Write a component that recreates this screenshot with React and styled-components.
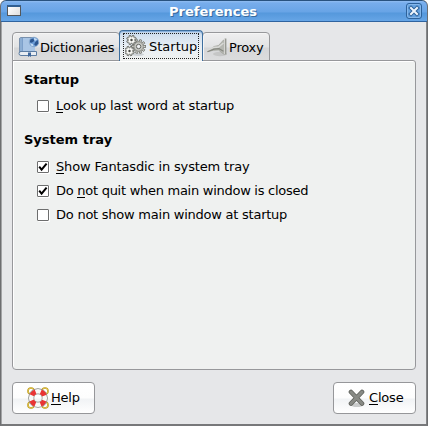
import React from 'react';
import styled, { createGlobalStyle } from 'styled-components';

const Global = createGlobalStyle`
  * { box-sizing: border-box; }
  html, body { margin: 0; padding: 0; overflow: hidden; background: #fff; }
  body { font-family: "DejaVu Sans", sans-serif; font-size: 13px; color: #000; }
  svg { display: block; flex: none; }
`;

const Window = styled.div`
  width: 428px;
  height: 426px;
  display: flex;
  flex-direction: column;
  background: #e6e7e9;
  border: 1px solid #6d6e70;
  border-top: 0;
  border-bottom: 2px solid #77787a;
  border-radius: 6px 6px 0 0;
  box-shadow: inset 1px 0 #a3a4a6, inset -1px 0 #858688;
  overflow: hidden;
`;

const TitleBar = styled.header`
  display: grid;
  grid-template-columns: 24px 1fr 24px;
  align-items: center;
  flex: none;
  height: 22px;
  margin: 0 -1px;
  padding: 0 5px;
  border: 1px solid #2f639f;
  border-top-color: #28527f;
  border-radius: 6px 6px 0 0;
  background: linear-gradient(#91bdf1 0, #77adec 2px, #68a4e6 11px, #5598dc 12px, #66a5e6 20px);
`;

const WindowIcon = styled.span`
  width: 14px;
  height: 11px;
  margin: 0 0 1px 1px;
  border: 1px solid #54575a;
  border-top: 2px solid #315f91;
  background: linear-gradient(135deg, #fff, #dedede);
`;

const Title = styled.h1`
  margin: 1px 1px 0 0;
  padding-right: 1px;
  text-align: center;
  font-size: 13px;
  line-height: 16px;
  font-weight: bold;
  color: #fff;
  text-shadow: 1px 1px #386b9e;
`;

const TitleButton = styled.button`
  display: grid;
  place-items: center;
  justify-self: end;
  width: 16px;
  height: 16px;
  padding: 0;
  border: 1px solid #2d629b;
  border-radius: 3px;
  background: #64a1df;
  box-shadow: inset 0 0 0 1px #86b7ea;
`;

const Body = styled.main`
  display: flex;
  flex-direction: column;
  flex: 1;
  padding: 8px 11px 10px;
`;

const TabBar = styled.nav`
  display: flex;
  align-items: flex-end;
  height: 31px;
  position: relative;
  z-index: 1;
`;

const Label = styled.span`
  line-height: 16px;
  white-space: nowrap;
  letter-spacing: ${p => p.$spacing || 0}px;
`;

const Tab = styled.button`
  display: flex;
  align-items: center;
  width: ${p => p.$width}px;
  height: ${p => (p.$active ? 31 : 29)}px;
  margin: 0 ${p => (p.$active ? -1 : 0)}px;
  padding: 0 0 ${p => (p.$active ? 1 : 0)}px ${p => p.$inset}px;
  gap: ${p => p.$gap}px;
  position: relative;
  z-index: ${p => (p.$active ? 1 : 0)};
  font: inherit;
  color: #000;
  border: 1px solid ${p => (p.$active ? '#3e6f9f' : '#97989b')};
  border-bottom: ${p => (p.$active ? '0' : '1px solid #97989b')};
  border-radius: 4px 4px 0 0;
  background: ${p => (p.$active
    ? 'linear-gradient(#b9d0e9 0, #d2e0ef 4px, #e9eff4 16px, #eff1f0 28px)'
    : 'linear-gradient(#efeff0 0, #e2e3e4 14px, #d5d6d8 15px, #dcddde 28px)')};
  box-shadow: ${p => (p.$active ? 'inset 0 1px #87b0dc' : 'inset 1px 1px #f5f5f5')};

  ${Label} { padding-top: 2px; }
`;

const FocusRing = styled.span`
  position: absolute;
  inset: 2px 3px 2px;
  border: 1px dotted #222;
`;

const Mnemonic = styled.span`
  display: inline-block;
  height: 15px;
  border-bottom: 1px solid #000;
  line-height: 16px;
  vertical-align: top;
`;

const Panel = styled.section`
  height: 310px;
  margin-top: -1px;
  padding: 11px 11px;
  background: #eff1f0;
  border: 1px solid #97989b;
  border-radius: 0 3px 4px 4px;
  box-shadow: inset 1px 1px #fff;
`;

const Group = styled.div`
  height: ${p => p.$height}px;
`;

const Heading = styled.h2`
  margin: 0 0 ${p => p.$gap}px;
  font-size: 13px;
  line-height: 15px;
  letter-spacing: ${p => p.$spacing || 0}px;
`;

const Option = styled.label`
  display: flex;
  align-items: center;
  height: 24px;
  padding-left: 13px;
  gap: 7px;
`;

const Box = styled.span`
  width: 12px;
  height: 12px;
  flex: none;
  background: #fff;
  border: 1px solid #6d6e6e;
  border-radius: 1px;
  box-shadow: 1px 1px #fff;
`;

const Actions = styled.footer`
  display: flex;
  justify-content: space-between;
  margin-top: 12px;
`;

const ActionButton = styled.button`
  display: flex;
  align-items: center;
  width: 83px;
  height: 32px;
  padding: 0 0 0 14px;
  gap: ${p => p.$gap}px;
  font: inherit;
  color: #000;
  border: 1px solid #96979a;
  border-radius: 4px;
  background: linear-gradient(#fff 0, #fdfdfd 15px, #f1f3f5 16px, #fff 30px);
`;

const DictionaryIcon = () => (
  <svg width="22" height="22" viewBox="0 0 22 22">
    <path d="M2.5 1.5h14v15h-15V3a1.5 1.5 0 0 1 1-1.5z" fill="#8caed4" stroke="#7890ad" />
    <path d="M5 2h12v13H5z" fill="#a9c5e5" />
    <path d="M4.5 2v13" stroke="#7da0ca" />
    <path d="M2 15.5h16.5v4H3a1.5 1.5 0 0 1 0-4z" fill="#e8edf3" stroke="#5c7da3" />
    <path d="M10 16.5V21l1.5-1 1.5 1v-4.5z" fill="#3e679c" />
    <circle cx="16" cy="6" r="4.8" fill="#6b9bd5" stroke="#8da9c9" strokeWidth=".7" />
    <path d="M12.4 3.6l3-1 .8 2.4-2.4 1.8-2-.6zM17 6.5l2.6-2.4.8 3.5-2.4 2.4-1.8-1.6z" fill="#2d568f" />
    <path d="M16 1.7l3.2 1.5-1.6 1.6-1.4-.6zM12 7.2l2.8.8.8 2-2 0z" fill="#c5ddf4" />
  </svg>
);

const Teeth = ({ x, y, r, n, w, fill, stroke }) => (
  <g transform={`translate(${x} ${y})`}>
    {Array.from({ length: n }, (_, i) => (
      <rect key={i} x={-w / 2} y={-r} width={w} height={3} fill={fill} stroke={stroke} strokeWidth=".8" transform={`rotate(${((i + 0.5) * 360) / n})`} />
    ))}
  </g>
);

const GearsIcon = () => (
  <svg width="22" height="22" viewBox="0 0 22 22">
    <ellipse cx="13" cy="19.5" rx="6" ry="1.5" fill="#ccd1d5" />
    <Teeth x={13.6} y={11.5} r={7} n={10} w={2} fill="#d3d4cf" stroke="#74766f" />
    <circle cx="13.6" cy="11.5" r="4.7" fill="#c6c7c2" stroke="#85877f" strokeWidth=".8" />
    <circle cx="13.6" cy="11.5" r="2.2" fill="#eef1f3" stroke="#666862" />
    {[[6.5, 5], [4.5, 16]].map(([x, y]) => (
      <g key={y}>
        <Teeth x={x} y={y} r={4.8} n={8} w={1.8} fill="#e5e5e0" stroke="#61635d" />
        <rect x={x - 2.8} y={y - 2.8} width="5.6" height="5.6" rx="1" fill="#f7f7f3" />
        <circle cx={x} cy={y} r="1.2" fill="#454743" />
      </g>
    ))}
  </svg>
);

const ProxyIcon = () => (
  <svg width="22" height="22" viewBox="0 0 22 22">
    <ellipse cx="14" cy="18" rx="7" ry="2.2" fill="#c5c6c6" />
    <path d="M1.5 15.5l6.5-5 4.5-1 5-5.5 1.5 0v14l-1.5 0-5-4-5 .3z" fill="#b5b7b1" stroke="#a0a29b" strokeWidth=".7" />
    <path d="M1 14.8l6.5-3.3 5-.5 5-4" fill="none" stroke="#d9dad7" strokeWidth="1.4" />
    <path d="M1.5 15.7l6.5-2.5 5-.5 4.5 2.5" fill="none" stroke="#868880" strokeWidth="1.2" />
    <path d="M19.5 2.5v16" stroke="#999b94" strokeWidth="1.8" />
    <path d="M18.5 3v15" stroke="#dfe0dd" strokeWidth=".8" />
  </svg>
);

const ropeCorners = [[4, 4], [18, 4], [4, 18], [18, 18]];

const LifebuoyIcon = () => (
  <svg width="22" height="22" viewBox="0 0 22 22">
    {ropeCorners.map(([x, y]) => (
      <g key={`${x}-${y}`} fill="none">
        <circle cx={x} cy={y} r="3" stroke="#b99411" strokeWidth="1.6" />
        <circle cx={x} cy={y} r="3" stroke="#f2d969" strokeWidth=".6" />
      </g>
    ))}
    <circle cx="11" cy="11" r="6.8" fill="none" stroke="#858781" strokeWidth="6" />
    <circle cx="11" cy="11" r="6.8" fill="none" stroke="#f8f8f6" strokeWidth="4.6" />
    <circle cx="11" cy="11" r="6.8" fill="none" stroke="#e93434" strokeWidth="4.8" strokeDasharray="5.34 5.34" transform="rotate(22.5 11 11)" />
  </svg>
);

const CloseIcon = () => (
  <svg width="18" height="20" viewBox="0 0 18 20">
    <ellipse cx="9" cy="17" rx="6" ry="2" fill="#c9cbcb" />
    <path d="M3 4l11 11.5M14 4l-11 11.5" stroke="#62645f" strokeWidth="4.6" strokeLinecap="round" />
    <path d="M3 4l11 11.5M14 4l-11 11.5" stroke="#888a85" strokeWidth="3" strokeLinecap="round" />
  </svg>
);

const Check = () => (
  <svg width="10" height="10" viewBox="0 0 10 10">
    <path d="M1.2 4.6l2.4 3 5-6" fill="none" stroke="#000" strokeWidth="2" />
  </svg>
);

const WindowClose = () => (
  <svg width="12" height="12" viewBox="0 0 12 12">
    <path d="M3 3l6 6M9 3L3 9" stroke="#2d629b" strokeWidth="4" strokeLinecap="square" />
    <path d="M3 3l6 6M9 3L3 9" stroke="#eef5fc" strokeWidth="2" strokeLinecap="square" />
  </svg>
);

const CheckOption = ({ checked, before = '', mnemonic, rest, spacing }) => (
  <Option>
    <Box>{checked && <Check />}</Box>
    <Label $spacing={spacing}>{before}{mnemonic && <Mnemonic>{mnemonic}</Mnemonic>}{rest}</Label>
  </Option>
);

export default function App() {
  return (
    <>
      <Global />
      <Window>
        <TitleBar>
          <WindowIcon />
          <Title>Preferences</Title>
          <TitleButton aria-label="Close window"><WindowClose /></TitleButton>
        </TitleBar>
        <Body>
          <TabBar>
            <Tab $width={108} $inset={5} $gap={0}><DictionaryIcon /><Label $spacing={-0.25}>Dictionaries</Label></Tab>
            <Tab $width={84} $inset={5} $gap={2} $active><FocusRing /><GearsIcon /><Label>Startup</Label></Tab>
            <Tab $width={68} $inset={3} $gap={1}><ProxyIcon /><Label $spacing={-0.2}>Proxy</Label></Tab>
          </TabBar>
          <Panel>
            <Group $height={60}>
              <Heading $gap={7} $spacing={-0.1}>Startup</Heading>
              <CheckOption mnemonic="L" rest="ook up last word at startup" spacing={-0.18} />
            </Group>
            <Group $height={100}>
              <Heading $gap={8}>System tray</Heading>
              <CheckOption checked mnemonic="S" rest="how Fantasdic in system tray" spacing={-0.15} />
              <CheckOption checked before="Do " mnemonic="n" rest="ot quit when main window is closed" spacing={-0.27} />
              <CheckOption rest="Do not show main window at startup" spacing={-0.24} />
            </Group>
          </Panel>
          <Actions>
            <ActionButton $gap={2}><LifebuoyIcon /><Label $spacing={-0.25}><Mnemonic>H</Mnemonic>elp</Label></ActionButton>
            <ActionButton $gap={3}><CloseIcon /><Label $spacing={-0.2}><Mnemonic>C</Mnemonic>lose</Label></ActionButton>
          </Actions>
        </Body>
      </Window>
    </>
  );
}
